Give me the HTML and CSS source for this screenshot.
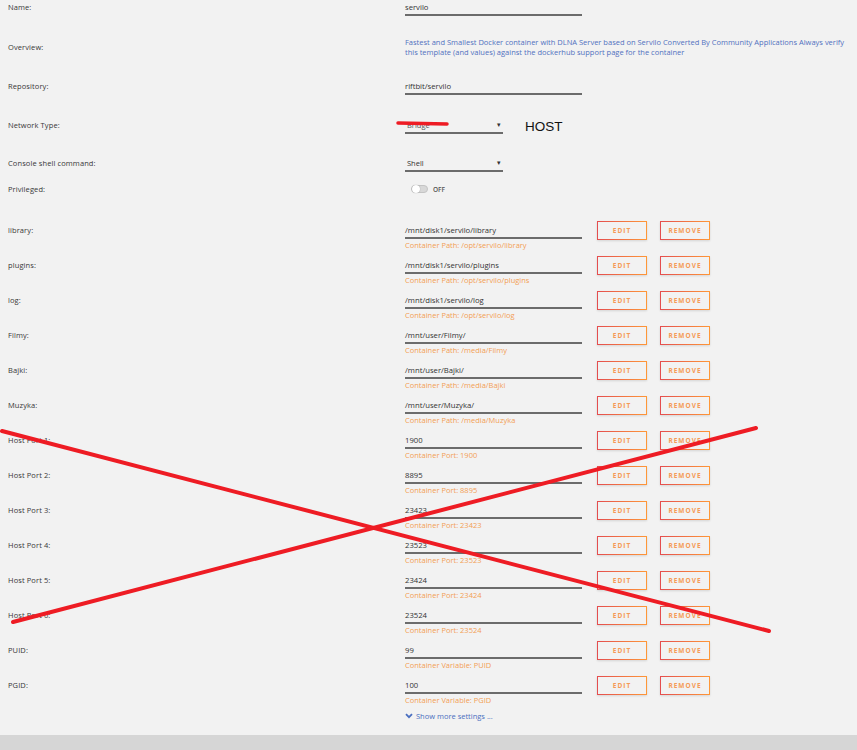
FILE: index.html
```html
<!DOCTYPE html>
<html>
<head>
<meta charset="utf-8">
<link rel="stylesheet" href="styles.css">
</head>
<body>
<div class="page">
  <div class="form">
    <div class="row r-name">
      <div class="label">Name:</div>
      <div class="field"><div class="input">servilo</div></div>
    </div>
    <div class="row r-overview">
      <div class="label lh20">Overview:</div>
      <div class="overview">Fastest and Smallest Docker container with DLNA Server based on Servilo Converted By Community Applications Always verify<br>this template (and values) against the dockerhub support page for the container</div>
    </div>
    <div class="row r-repo">
      <div class="label">Repository:</div>
      <div class="field"><div class="input">riftbit/servilo</div></div>
    </div>
    <div class="row r-net">
      <div class="label">Network Type:</div>
      <div class="selwrap">
        <div class="select"><span class="bridge">Bridge</span><span class="caret">&#9662;</span></div>
        <span class="host">HOST</span>
      </div>
    </div>
    <div class="row r-console">
      <div class="label">Console shell command:</div>
      <div class="selwrap">
        <div class="select"><span class="shell">Shell</span><span class="caret">&#9662;</span></div>
      </div>
    </div>
    <div class="row r-priv">
      <div class="label">Privileged:</div>
      <div class="toggle-wrap"><span class="toggle"><span class="knob"></span></span><span class="off">OFF</span></div>
    </div>

    <div class="row path first">
      <div class="label">library:</div>
      <div class="field"><div class="input">/mnt/disk1/servilo/library</div><div class="hint">Container Path: /opt/servilo/library</div></div>
      <div class="actions"><button class="btn">EDIT</button><button class="btn">REMOVE</button></div>
    </div>
    <div class="row path">
      <div class="label">plugins:</div>
      <div class="field"><div class="input">/mnt/disk1/servilo/plugins</div><div class="hint">Container Path: /opt/servilo/plugins</div></div>
      <div class="actions"><button class="btn">EDIT</button><button class="btn">REMOVE</button></div>
    </div>
    <div class="row path">
      <div class="label">log:</div>
      <div class="field"><div class="input">/mnt/disk1/servilo/log</div><div class="hint">Container Path: /opt/servilo/log</div></div>
      <div class="actions"><button class="btn">EDIT</button><button class="btn">REMOVE</button></div>
    </div>
    <div class="row path">
      <div class="label">Filmy:</div>
      <div class="field"><div class="input">/mnt/user/Filmy/</div><div class="hint">Container Path: /media/Filmy</div></div>
      <div class="actions"><button class="btn">EDIT</button><button class="btn">REMOVE</button></div>
    </div>
    <div class="row path">
      <div class="label">Bajki:</div>
      <div class="field"><div class="input">/mnt/user/Bajki/</div><div class="hint">Container Path: /media/Bajki</div></div>
      <div class="actions"><button class="btn">EDIT</button><button class="btn">REMOVE</button></div>
    </div>
    <div class="row path">
      <div class="label">Muzyka:</div>
      <div class="field"><div class="input">/mnt/user/Muzyka/</div><div class="hint">Container Path: /media/Muzyka</div></div>
      <div class="actions"><button class="btn">EDIT</button><button class="btn">REMOVE</button></div>
    </div>
    <div class="row path">
      <div class="label">Host Port 1:</div>
      <div class="field"><div class="input">1900</div><div class="hint">Container Port: 1900</div></div>
      <div class="actions"><button class="btn">EDIT</button><button class="btn">REMOVE</button></div>
    </div>
    <div class="row path">
      <div class="label">Host Port 2:</div>
      <div class="field"><div class="input">8895</div><div class="hint">Container Port: 8895</div></div>
      <div class="actions"><button class="btn">EDIT</button><button class="btn">REMOVE</button></div>
    </div>
    <div class="row path">
      <div class="label">Host Port 3:</div>
      <div class="field"><div class="input">23423</div><div class="hint">Container Port: 23423</div></div>
      <div class="actions"><button class="btn">EDIT</button><button class="btn">REMOVE</button></div>
    </div>
    <div class="row path">
      <div class="label">Host Port 4:</div>
      <div class="field"><div class="input">23523</div><div class="hint">Container Port: 23523</div></div>
      <div class="actions"><button class="btn">EDIT</button><button class="btn">REMOVE</button></div>
    </div>
    <div class="row path">
      <div class="label">Host Port 5:</div>
      <div class="field"><div class="input">23424</div><div class="hint">Container Port: 23424</div></div>
      <div class="actions"><button class="btn">EDIT</button><button class="btn">REMOVE</button></div>
    </div>
    <div class="row path">
      <div class="label">Host Port 6:</div>
      <div class="field"><div class="input">23524</div><div class="hint">Container Port: 23524</div></div>
      <div class="actions"><button class="btn">EDIT</button><button class="btn">REMOVE</button></div>
    </div>
    <div class="row path">
      <div class="label">PUID:</div>
      <div class="field"><div class="input">99</div><div class="hint">Container Variable: PUID</div></div>
      <div class="actions"><button class="btn">EDIT</button><button class="btn">REMOVE</button></div>
    </div>
    <div class="row path">
      <div class="label">PGID:</div>
      <div class="field"><div class="input">100</div><div class="hint">Container Variable: PGID</div></div>
      <div class="actions"><button class="btn">EDIT</button><button class="btn">REMOVE</button></div>
    </div>
    <div class="row r-more">
      <div></div>
      <div class="more"><svg class="chev" width="8" height="6" viewBox="0 0 8 6"><path d="M1 1.2 L4 4.2 L7 1.2" fill="none" stroke="#4a6fc0" stroke-width="1.8"/></svg><span>Show more settings ...</span></div>
    </div>
  </div>
  <div class="footer"></div>
  <svg class="marks" width="857" height="750" viewBox="0 0 857 750">
    <line x1="398" y1="123" x2="447" y2="124" stroke="#ee1c24" stroke-width="3.5" stroke-linecap="round"/>
    <line x1="2" y1="431" x2="769" y2="631" stroke="#ee1c24" stroke-width="4" stroke-linecap="round"/>
    <line x1="13" y1="622" x2="756" y2="428" stroke="#ee1c24" stroke-width="4" stroke-linecap="round"/>
  </svg>
</div>
</body>
</html>
```

FILE: styles.css
```css
html, body {
  margin: 0;
  padding: 0;
  background: #f2f2f2;
}
body {
  font-family: "Open Sans", "Noto Sans", sans-serif;
  color: #444;
}
.page {
  position: relative;
  width: 857px;
  height: 750px;
  overflow: hidden;
}
.form {
  display: flex;
  flex-direction: column;
  padding: 0 0 0 8px;
  height: 735px;
  box-sizing: border-box;
}
.row {
  display: grid;
  grid-template-columns: 397px 177px auto;
  align-items: start;
}
.label {
  font-size: 7.5px;
  line-height: 14px;
  color: #383838;
  font-weight: 400;
  letter-spacing: 0.1px;
}
.lh20 { line-height: 20px; }
.input {
  font-size: 7.7px;
  line-height: 14px;
  height: 14px;
  color: #333;
  border-bottom: 2px solid #6c6c6c;
}
.hint {
  font-size: 7.5px;
  line-height: 12px;
  color: #f2a055;
}
.overview {
  grid-column: 2 / 4;
  font-size: 7.5px;
  line-height: 10px;
  color: #5171c0;
  white-space: nowrap;
}
.r-overview { margin-top: 21px; }
.r-repo { margin-top: 22px; }
.r-net { margin-top: 23px; }
.r-console { margin-top: 22px; }
.r-priv { margin-top: 10px; }
.path { margin-top: 7px; }
.path.first { margin-top: 27px; }
.r-more { margin-top: 3px; }

.selwrap {
  grid-column: 2 / 4;
  display: flex;
  align-items: center;
}
.select {
  width: 98px;
  height: 14px;
  display: flex;
  justify-content: space-between;
  align-items: center;
  font-size: 7.5px;
  line-height: 14px;
  color: #333;
  border-bottom: 2px solid #6c6c6c;
  box-sizing: content-box;
}
.select .bridge { padding-left: 2px; color: #555; }
.select .shell { padding-left: 2px; }
.caret {
  font-size: 7px;
  color: #333;
  padding-right: 2px;
}
.host {
  margin-left: 22px;
  font-family: "Liberation Sans", "Open Sans", sans-serif;
  font-size: 13.5px;
  color: #111;
  line-height: 14px;
  margin-top: 1px;
}
.toggle-wrap {
  display: flex;
  align-items: center;
  height: 14px;
  padding-left: 6px;
}
.toggle {
  width: 17px;
  height: 8px;
  border-radius: 4px;
  background: #d8d8d8;
  border: 1px solid #c4c4c4;
  box-sizing: border-box;
  position: relative;
}
.knob {
  position: absolute;
  left: 0;
  top: -1px;
  width: 8px;
  height: 8px;
  border-radius: 50%;
  background: #fff;
  box-shadow: 0 0 1px rgba(0,0,0,0.4);
}
.off {
  margin-left: 5px;
  font-size: 6.5px;
  color: #555;
  font-weight: 600;
}
.actions {
  display: flex;
  gap: 13px;
  padding-left: 15px;
  margin-top: -2px;
}
.btn {
  width: 50px;
  height: 19px;
  padding: 0;
  background: #f2f2f2;
  border: 1px solid;
  border-image: linear-gradient(to right, #e44d4f, #ff9838) 1;
  box-shadow: 0 1px 2px rgba(0,0,0,0.12);
  font-family: "Open Sans", sans-serif;
  font-size: 6.5px;
  font-weight: 700;
  letter-spacing: 1px;
  color: #f59a55;
  text-align: center;
}
.more {
  grid-column: 2 / 4;
  display: flex;
  align-items: center;
  gap: 3px;
  font-size: 7.5px;
  line-height: 14px;
  color: #4a6fc0;
}
.footer {
  height: 15px;
  background: #d6d6d6;
}
.marks {
  position: absolute;
  left: 0;
  top: 0;
  pointer-events: none;
}
```
